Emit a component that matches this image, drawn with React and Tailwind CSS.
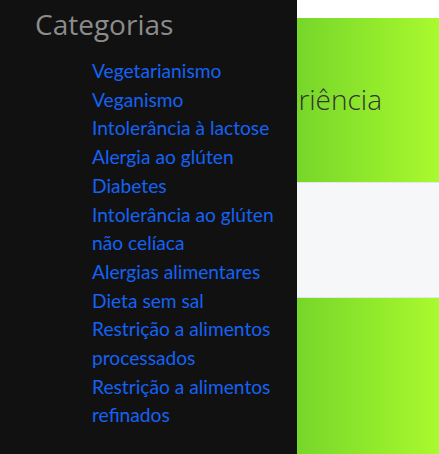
import React from "react";

const categorias = [
  "Vegetarianismo",
  "Veganismo",
  "Intolerância à lactose",
  "Alergia ao glúten",
  "Diabetes",
  "Intolerância ao glúten não celíaca",
  "Alergias alimentares",
  "Dieta sem sal",
  "Restrição a alimentos processados",
  "Restrição a alimentos refinados",
];

const App = () => {
  return (
    <div
      className="relative w-[439px] h-[454px] overflow-hidden bg-white"
      style={{ fontFamily: "'Open Sans', 'Noto Sans', sans-serif" }}
    >
      {/* --- Page content (behind the offcanvas) --- */}
      <div className="flex flex-col pt-[18px]">
        <section className="h-[164px] flex items-center justify-end pr-[57px] bg-[linear-gradient(to_right,#0b8b1f,#a9fa2e)]">
          <h1 className="text-[28px] font-light text-[#333] whitespace-nowrap -mt-[2px]">
            Conte sua experiência
          </h1>
        </section>
        <section className="h-[116px] bg-[#f6f7f9] border-y border-[#e3e5e8]" />
        <section className="h-[160px] bg-[linear-gradient(to_right,#0b8b1f,#a9fa2e)]" />
      </div>

      {/* --- Offcanvas sidebar --- */}
      <aside className="absolute top-0 left-0 bottom-0 w-[297px] bg-[#111111]">
        <h2 className="pl-[35px] pt-[4px] text-[28px] leading-[40px] text-[#8c8c8c]">
          Categorias
        </h2>
        <ul
          className="pl-[92px] mt-[13px] w-[290px]"
          style={{ fontFamily: "Lato, 'Open Sans', sans-serif" }}
        >
          {categorias.map((c, i) => (
            <li key={i} className="text-[19.2px] leading-[28.7px]">
              <a href="#" className="text-[#1562f5]">
                {c}
              </a>
            </li>
          ))}
        </ul>
      </aside>
    </div>
  );
};

export default App;
